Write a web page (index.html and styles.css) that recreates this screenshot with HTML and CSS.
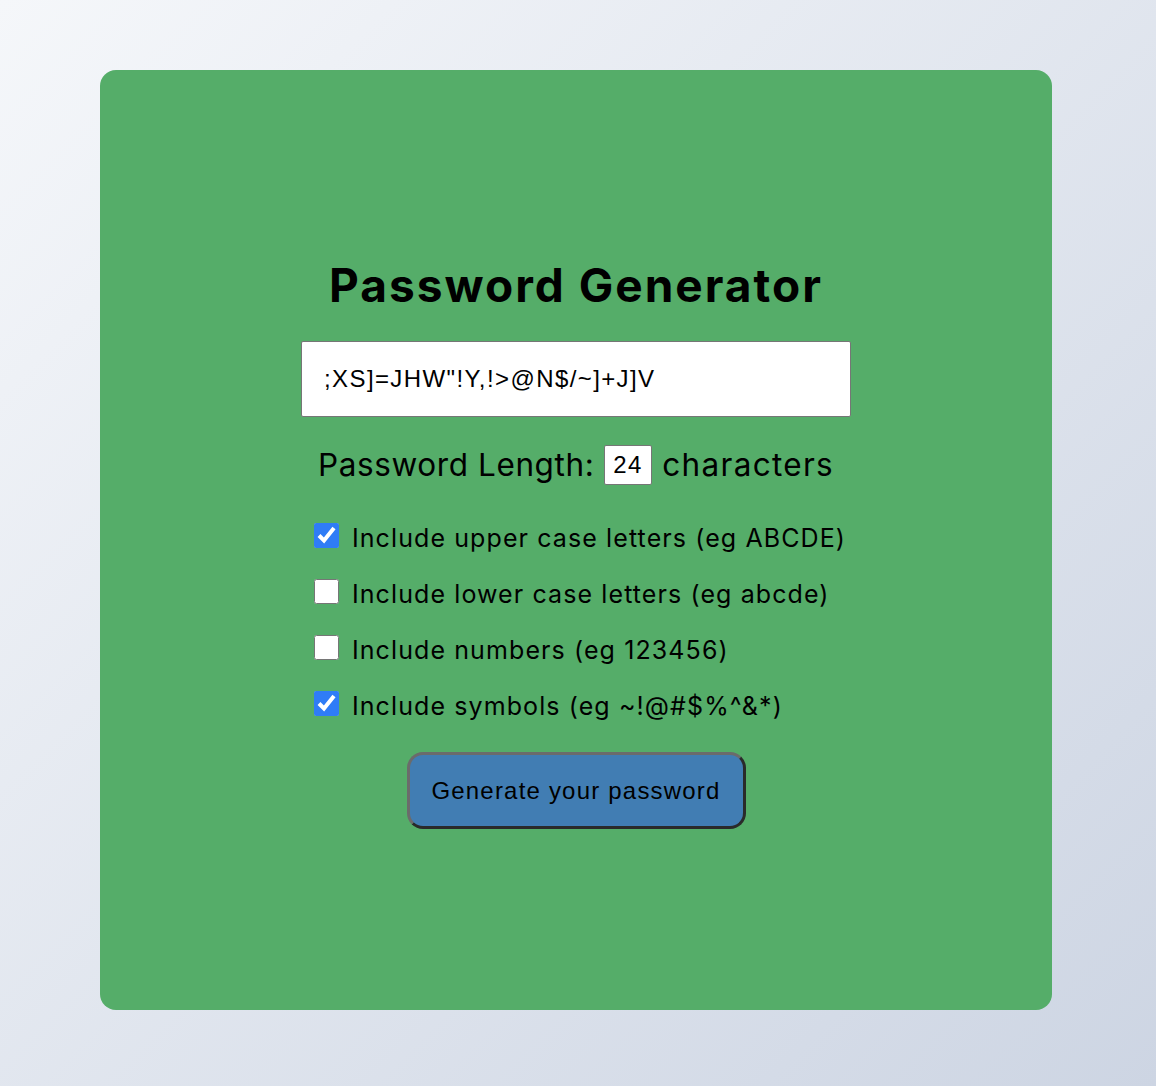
FILE: index.html
```html
<!DOCTYPE html>
<html lang="en">
<head>
<meta charset="utf-8">
<title>Password Generator</title>
<link rel="stylesheet" href="styles.css">
</head>
<body>
<main class="card">
  <h1 class="title">Password Generator</h1>
  <input class="password" type="text" value=";XS]=JHW&quot;!Y,!&gt;@N$/~]+J]V" readonly>
  <div class="length">
    <label for="len">Password Length:</label>
    <input id="len" class="len-input" type="text" value="24">
    <span class="unit">characters</span>
  </div>
  <div class="options">
    <label class="option"><input type="checkbox" checked><span>Include upper case letters (eg ABCDE)</span></label>
    <label class="option"><input type="checkbox"><span>Include lower case letters (eg abcde)</span></label>
    <label class="option"><input type="checkbox"><span>Include numbers (eg 123456)</span></label>
    <label class="option"><input type="checkbox" checked><span>Include symbols (eg ~!@#$%^&amp;*)</span></label>
  </div>
  <button class="generate" type="button">Generate your password</button>
</main>
</body>
</html>
```

FILE: styles.css
```css
html, body {
  margin: 0;
  padding: 0;
}
body {
  width: 1156px;
  height: 1086px;
  background: linear-gradient(135deg, #f5f7fa 0%, #cdd5e3 100%);
  font-family: Inter, "Noto Sans", sans-serif;
  color: #000;
  padding: 70px 0 0 100px;
  box-sizing: border-box;
}
.card {
  width: 952px;
  height: 940px;
  background: #55ad69;
  border-radius: 16px;
  display: flex;
  flex-direction: column;
  align-items: center;
  justify-content: center;
  box-sizing: border-box;
  padding-top: 4px;
}
.title {
  margin: 0 0 26px;
  font-size: 46px;
  font-weight: 700;
  line-height: 60px;
  letter-spacing: 2px;
}
.password {
  width: 550px;
  height: 76px;
  box-sizing: border-box;
  border: 1px solid #767676;
  border-radius: 2px;
  padding: 0 22px;
  font-family: "Liberation Sans", Arial, sans-serif;
  font-size: 24px;
  letter-spacing: 1.4px;
  color: #000;
  background: #fff;
  outline: none;
}
.length {
  margin-top: 28px;
  display: flex;
  align-items: center;
  gap: 10px;
  font-size: 31.5px;
  letter-spacing: 0.6px;
  line-height: 40px;
}
.unit {
  letter-spacing: 1.3px;
}
.len-input {
  width: 48px;
  height: 40px;
  box-sizing: border-box;
  border: 1px solid #767676;
  border-radius: 2px;
  padding: 0 0 0 8px;
  font-family: "Liberation Sans", Arial, sans-serif;
  font-size: 24px;
  letter-spacing: 1.2px;
  background: #fff;
  color: #000;
}
.options {
  margin-top: 35px;
  display: flex;
  flex-direction: column;
  gap: 20px;
  padding-left: 8px;
}
.option {
  display: flex;
  align-items: center;
  gap: 13px;
  font-size: 25px;
  letter-spacing: 1.1px;
  line-height: 36px;
}
.option input {
  width: 25px;
  height: 25px;
  margin: 0 0 6px;
  accent-color: #2f7cf6;
}
.generate {
  margin-top: 28px;
  width: 339px;
  height: 77px;
  border: 3px solid;
  border-color: #6b6b6b #2a2a2a #2a2a2a #6b6b6b;
  border-radius: 16px;
  background: #417db3;
  font-family: "Liberation Sans", Arial, sans-serif;
  font-size: 24px;
  letter-spacing: 1.2px;
  color: #000;
}
```
